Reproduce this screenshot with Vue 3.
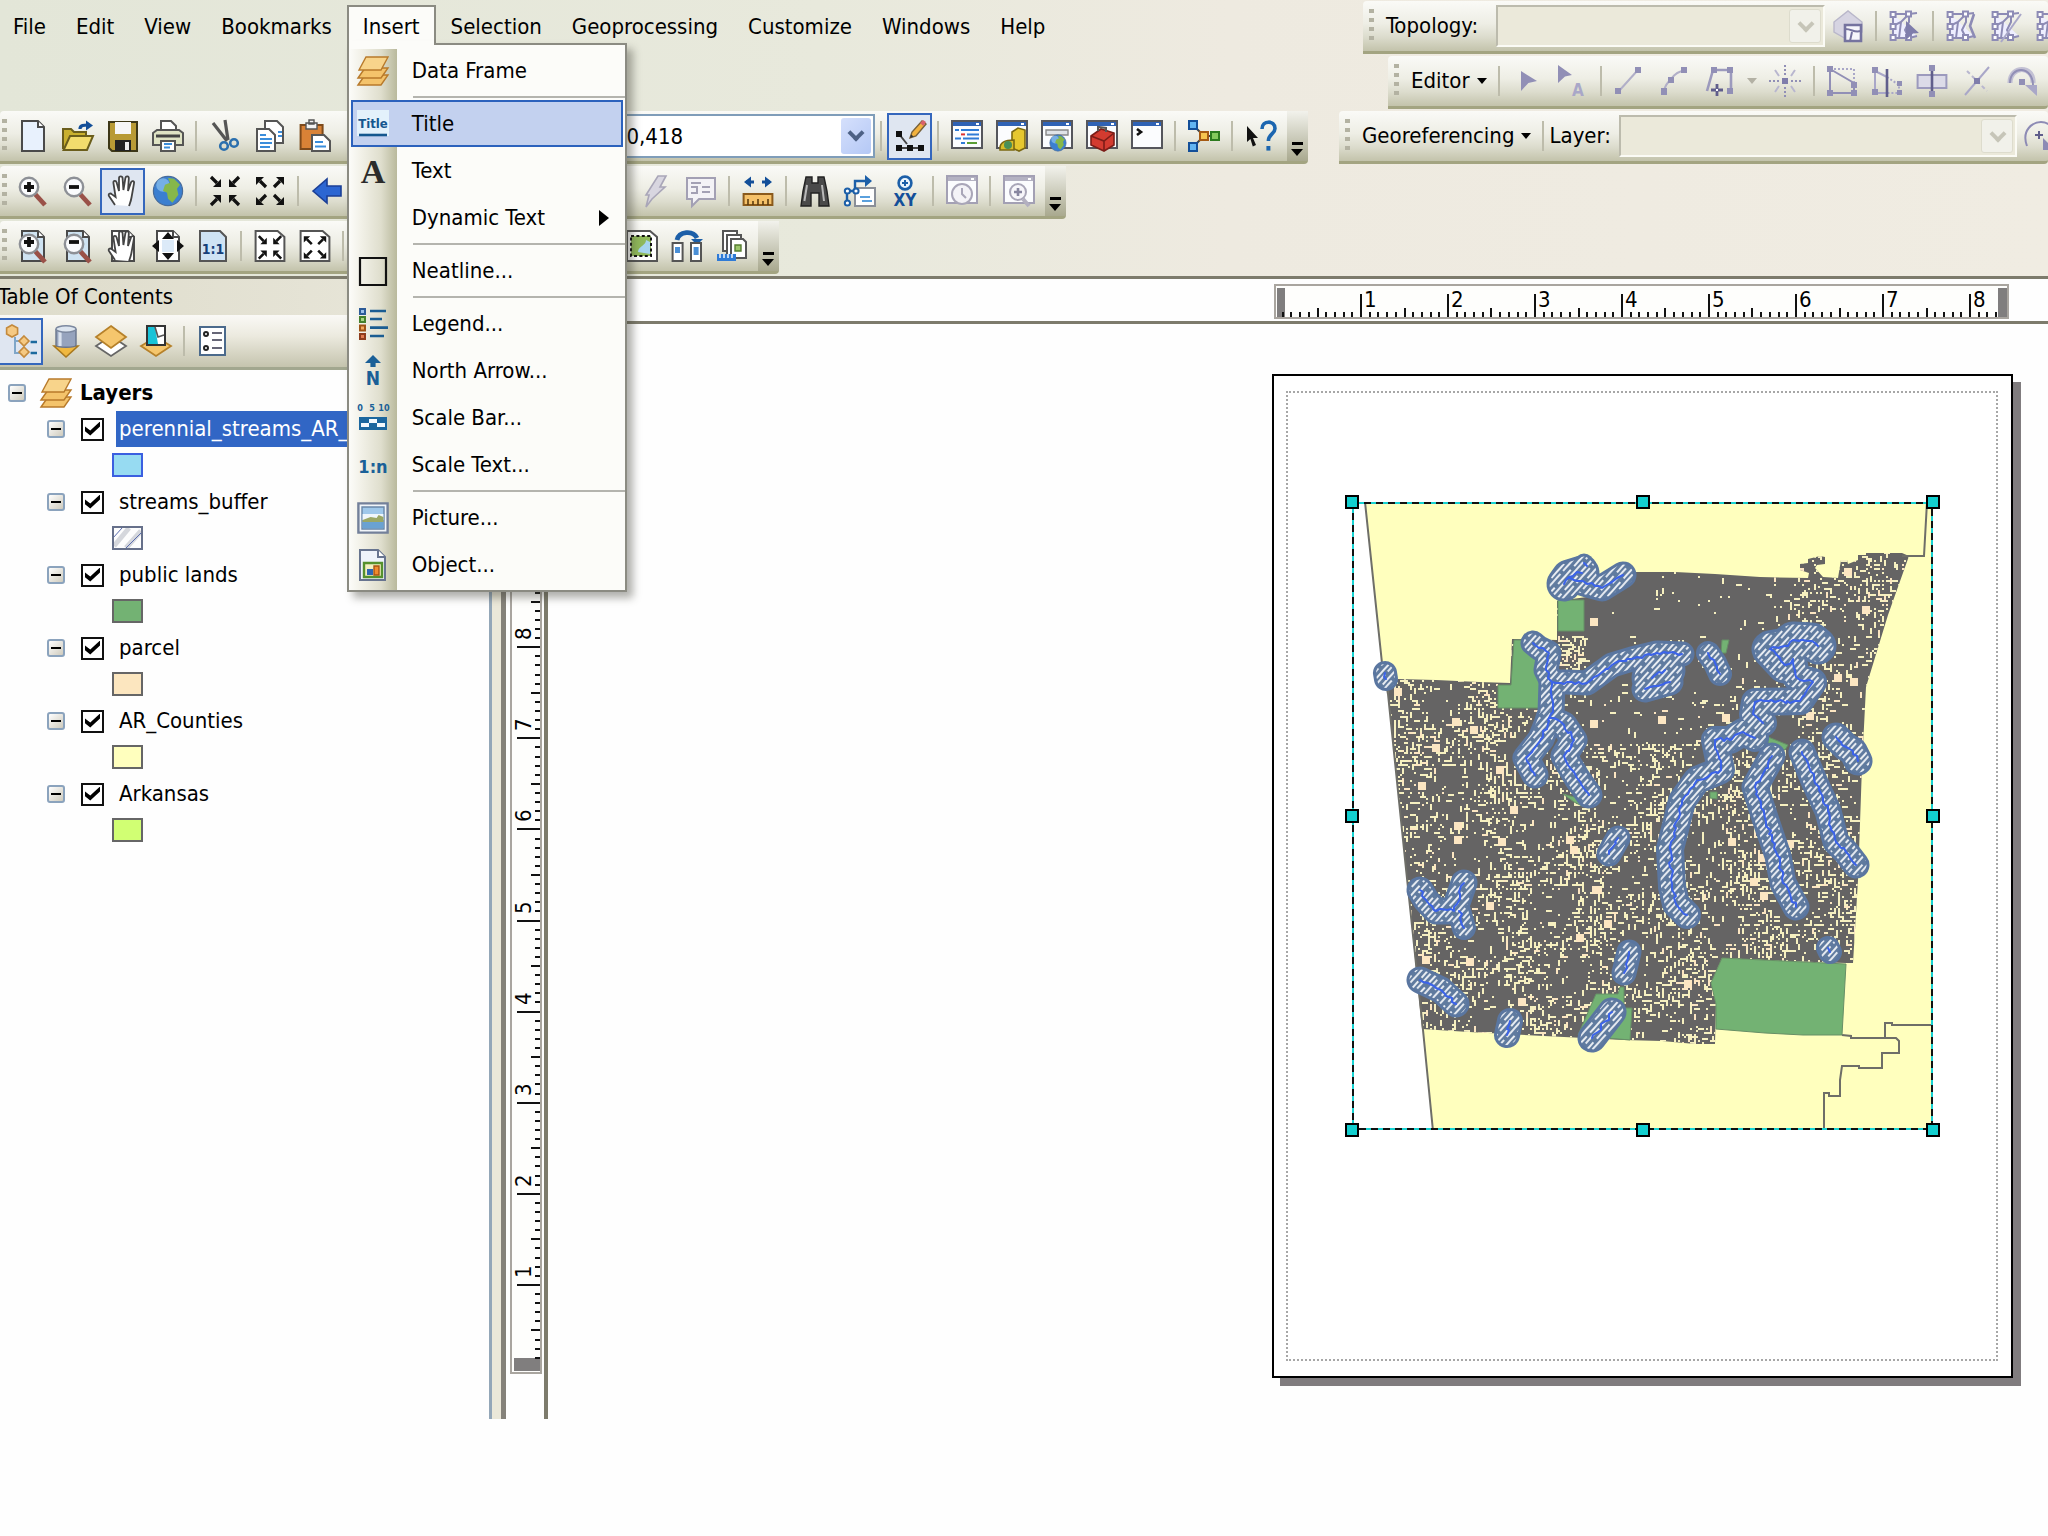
<script setup>
/* ---------- icon artwork, drawn on a 16 x 16 grid ---------- */
const sheet = (fill = '#f4f8fd') =>
  `<path d="M2.5.5h8l3 3v12h-11z" fill="${fill}" stroke="#4a4a4a"/><path d="M10.5.5v3h3" fill="#fff" stroke="#4a4a4a"/>`
const pane = (body, frame = '#55565c', bar = '#2f62b5') =>
  `<path d="M.5.5h15v13.500h-15z" fill="#fbfcfe" stroke="${frame}"/><path d="M1 1h14v2H1z" fill="${bar}"/><path d="M12.500 1.500h1.500v1h-1.500z" fill="#fff"/>${body}`
const lens = (sign, cx = 6, cy = 6) =>
  `<path d="M${cx + 3} ${cy + 3.500}l5 5.500" stroke="#9a5148" stroke-width="2.400"/><circle cx="${cx}" cy="${cy}" r="4.600" fill="#fafbfd" stroke="#8d9096" stroke-width="1.200"/><path d="${sign}" stroke="#111" stroke-width="1.900"/>`
const plus = 'M3.500 6h5M6 3.500v5'
const minus = 'M3.500 6h5'
const hand =
  '<path d="M4 15L1 10.500c-.6-1 .6-1.700 1.500-.8L4.300 11 3.200 4c-.1-1.300 1.300-1.500 1.600-.2L6 8 6 1.700C6 .4 7.700.4 7.800 1.700L8.200 7.500 9.200 1.500c.3-1.200 1.800-1 1.700.3L10.500 8l1.500-4.300c.5-1.100 1.800-.7 1.500.5L12.300 11c-.3 2-.8 3-1.300 4.500" fill="#fff" stroke="#444" stroke-width=".9"/>'
const inward = '<path d="M1 1l3 3M15 1l-3 3M1 15l3-3M15 15l-3-3" stroke="#111" stroke-width="1.600"/><path d="M6 2v4H2zM10 2v4h4zM6 14v-4H2zM10 14v-4h4z" fill="#111"/>'
const outward = '<path d="M6 6L3 3M10 6l3-3M6 10l-3 3M10 10l3 3" stroke="#111" stroke-width="1.600"/><path d="M1 1h4L1 5zM15 1h-4l4 4zM1 15h4l-4-4zM15 15h-4l4-4z" fill="#111"/>'
const stack =
  '<g fill="#f4c36b" stroke="#b87a2b" stroke-width=".7"><path d="M.5 15l3.500-5h11.500l-3.500 5z"/><path d="M.5 11.500l3.500-5h11.500l-3.500 5z"/><path d="M1 7.500L4.500 1h11L12 7.500z" fill="#f8d48b"/></g>'
const globe =
  '<circle cx="8" cy="8" r="7.300" fill="#3b7fd0" stroke="#476b9a" stroke-width=".6"/><circle cx="5.500" cy="5" r="3.400" fill="#8fc3ee" opacity=".7"/><path d="M8 1.500l3 .4 3 3-1.500 2 .7 3-3 4-2.200-2-.5-3-2-1 1-3 2.500-1z" fill="#86b74a"/>'
const mesh =
  '<path d="M2 2h8l4-.5M2 2v12h8l4-1M2 8l4-2 4-4M6 6l-1 8M10 2v4l-2 4 2 4" fill="#eef" stroke="#8d8bb5"/><path d="M.8 1h2.500v2.500H.8zM8.500.8H11v2.500H8.500zM.8 7h2.500v2.500H.8zM.8 12.500h2.500V15H.8zM8.500 12.500H11V15H8.500z" fill="#fff" stroke="#8d8bb5"/>'

const art = {
  newdoc: sheet('#e8f1fd'),
  open: '<path d="M.5 14.500v-10h4l1.500 1.500h6v2" fill="#c9b02e" stroke="#6b5e1c"/><path d="M.8 15L4 8h11.500l-3 7z" fill="#f2dc6d" stroke="#6b5e1c"/><path d="M9 4.500c0-2 2-2 4-2" stroke="#134f99" stroke-width="1.600" fill="none"/><path d="M12 .3l3.500 2.400L12 5.300z" fill="#134f99"/>',
  save: '<path d="M1 1h14v14.500H2.500L1 14z" fill="#b89a35" stroke="#3d3717"/><path d="M4 1h8v6H4z" fill="#f6f6f6"/><path d="M4 10h8v5.500H4z" fill="#222"/><path d="M9 11h2v4H9z" fill="#eee"/>',
  print: '<path d="M4.500 6V.5h5l2.500 2.500V6" fill="#fff" stroke="#555"/><path d="M.5 6.500L2.500 5h11l2 1.500v6H.5z" fill="#dfe3c4" stroke="#555"/><path d="M2 8h12" stroke="#444" stroke-width="1.500"/><path d="M4.500 10.500h7v5h-7z" fill="#fff" stroke="#555"/><path d="M6 12h4M6 13.700h3" stroke="#3b8ddb"/>',
  cut: '<path d="M2 1.500l7 9M8 0l1.500 10" stroke="#555" stroke-width="1.600"/><circle cx="7.500" cy="13" r="1.900" fill="none" stroke="#2b6fae" stroke-width="1.300"/><circle cx="12.500" cy="11.500" r="1.900" fill="none" stroke="#2b6fae" stroke-width="1.300"/>',
  copy: '<path d="M5.500.5h6l3 3v8h-9z" fill="#fff" stroke="#555"/><path d="M1.500 4.500h6l3 3v8h-9z" fill="#fff" stroke="#555"/><path d="M3 7.500h3M3 9.500h6M3 11.500h6M3 13.500h5M12 6h2M12 8h2" stroke="#3b8ddb"/>',
  paste: '<path d="M.8 2.500h11v12H.8z" fill="#d98236" stroke="#7d4a1b"/><path d="M3.500 1.500h5.500v3H3.500zM5 0h2.500v2H5z" fill="#f3f3f3" stroke="#555" stroke-width=".7"/><path d="M6.500 7.500h6l3 3v5h-9z" fill="#fff" stroke="#555"/><path d="M8 11h4M8 13.200h5.500" stroke="#3b8ddb"/>',
  zoomin: lens(plus),
  zoomout: lens(minus),
  hand,
  globe,
  inward,
  outward,
  back: '<path d="M1 8l7-6v3.500h7v5H8V14z" fill="#2c66d2" stroke="#1b3f96" stroke-width=".8"/>',
  pgin: sheet('#cfe3f2') + lens(plus, 6, 7),
  pgout: sheet('#cfe3f2') + lens(minus, 6, 7),
  pghand: sheet('#fff') + hand,
  pgall: sheet('#fff') + '<path d="M8 1l3 3.500H5zM8 15l3-3.500H5zM0 8l3.500-3v6zM16 8l-3.500-3v6z" fill="#111"/><path d="M5 5h6v6H5z" fill="#dceaf8"/>',
  pgone: '<path d="M1.500.5h10l3 3v12h-13z" fill="#cfe3f4" stroke="#555"/><text x="8" y="12" font-size="7" font-weight="700" text-anchor="middle" fill="#163f78">1:1</text>',
  pgfixin: '<path d="M.8.5h11l3.400 3v12H.8z" fill="#fff" stroke="#555"/><g transform="translate(1.600 2.300) scale(.8)">' + inward + '</g>',
  pgfixout: '<path d="M.8.5h11l3.400 3v12H.8z" fill="#fff" stroke="#555"/><g transform="translate(1.600 2.300) scale(.8)">' + outward + '</g>',
  edit: '<path d="M2.500 7l4 5M2 14h12" stroke="#444"/><path d="M1 5.500h3v3H1zM1 12.500h3v3H1zM6.500 12.500h3v3h-3zM12 12.500h3v3h-3z" fill="#111"/><path d="M8 9l1-3 5-5.500L16 2l-5 6z" fill="#f2b23e" stroke="#77613a" stroke-width=".7"/><path d="M13 1.500L14.500 0 16 1l-1.300 2z" fill="#d8626b"/><path d="M8 9l.6-1.800 1.200 1.100z" fill="#333"/>',
  listwin: pane('<path d="M5 7.200h2" stroke="#d33"/><path d="M2 5h2M5 5h9M8 7.200h6M2 9.300h3M6 9.300h8M5 11.500h2" stroke="#2f7bd6"/><path d="M8 11.500h5" stroke="#5a9e35"/>'),
  catalog: pane('<path d="M8 6l3-2 3.500 1v9l-3 1.500L8 14z" fill="#e6c72f" stroke="#7b6812" stroke-width=".8"/><path d="M2 14c0-3 3-4 7-4v5H2z" fill="#d9bd2a" stroke="#7b6812" stroke-width=".8"/><circle cx="6" cy="12.500" r="2" fill="#4a8f58"/>'),
  search: pane('<path d="M2.500 5h11v2.500h-11z" fill="#dfe3e8" stroke="#888" stroke-width=".7"/><g transform="translate(4 7) scale(.56)">' + globe + '</g>'),
  toolbox: pane('<path d="M2.500 8l5-3.500 6.500 2v6l-5 3-6.500-3z" fill="#d33b30" stroke="#7c1d18" stroke-width=".8"/><path d="M2.500 8l6.500 2.500 5-4M9 10.500v5" stroke="#7c1d18" fill="none" stroke-width=".8"/><path d="M6 5.500V3.500l4 .5V6" stroke="#555" fill="none"/>'),
  python: pane('<path d="M3 4.500l2 1.500-2 1.500" stroke="#111" fill="none" stroke-width="1.300"/>'),
  model: '<path d="M3 3l5 5-5 5M8 8h7" stroke="#444" fill="none"/><path d="M.5.5h4v4h-4zM.5 11.500h4v4h-4z" fill="#62b5f2" stroke="#134f99"/><path d="M6 6h4v4H6z" fill="#f6c54e" stroke="#a55b14"/><path d="M11.500 6h4v4h-4z" fill="#84c95c" stroke="#2c7a1e"/>',
  help: '<path d="M1 3l5.500 6H4l1.500 3.500-1.600.7L2.700 9.500 1 11z" fill="#111"/><path d="M8.500 4.500c0-4.500 6.500-4.500 6.500-.3C15 7 11.700 7 11.700 10.500" fill="none" stroke="#1c66b0" stroke-width="1.800"/><path d="M10.700 13h2v2.300h-2z" fill="#1c66b0"/>',
  bolt: '<path d="M9 .5h4L10 6h2.500L6 12l-3 4 1.500-6H3z" fill="#d8d6e0" stroke="#a9a6b8" stroke-width=".8"/>',
  popup: '<path d="M1 1.500h14v10.500H7L3.500 15.500V12H1z" fill="#f3f2f6" stroke="#a3a0b4"/><path d="M3 4h5M3 6h3v3H3M8.500 6h4M8.500 8.500h4" stroke="#a3a0b4"/>',
  measure: '<path d="M.8 9.500h14.400v5.500H.8z" fill="#f5c169" stroke="#8a5a1c"/><path d="M3 15v-3M5.500 15v-2M8 15v-3M10.500 15v-2M13 15v-3" stroke="#5d3c10" stroke-width=".8"/><path d="M2 3.500h4M10 3.500h4" stroke="#134f99" stroke-width="1.400"/><path d="M1 3.500L4.500.8v5.400zM15 3.500L11.500.8v5.400z" fill="#134f99"/>',
  binoc: '<path d="M3.500 1h3v3h3V1h3l1.500 7 1 7.500h-5V9H6v6.500H1L2 8z" fill="#4a4a4a" stroke="#222" stroke-width=".7"/><path d="M4 5L2.700 13M11.500 5l1 8" stroke="#b9b9b9"/>',
  route: '<path d="M5.500 6.500h10v9h-10z" fill="#fff" stroke="#8a8f98"/><path d="M1.500 14V8h4V3h6" stroke="#1c5fa8" fill="none" stroke-width="1.200"/><path d="M10.500 0L14 3l-3.500 3z" fill="#1c5fa8"/><circle cx="1.700" cy="8" r="1.300" fill="#fff" stroke="#1c5fa8"/><circle cx="1.700" cy="14" r="1.300" fill="#fff" stroke="#1c5fa8"/><circle cx="6" cy="8" r="1.300" fill="#fff" stroke="#1c5fa8"/><path d="M8 11h5M9 13h5" stroke="#5aa0dd"/>',
  xy: '<circle cx="8" cy="4" r="3.200" fill="#eaf4fc" stroke="#1c5fa8" stroke-width="1.300"/><path d="M6.500 4h3M8 2.500v3" stroke="#1c5fa8"/><text x="8" y="15.500" font-size="8.500" font-weight="700" text-anchor="middle" fill="#134f99">XY</text>',
  clock: pane('<circle cx="8" cy="9.500" r="5" fill="#f4f3f7" stroke="#a9a6b8"/><path d="M8 6.500v3l2 2" stroke="#a9a6b8" fill="none"/>', '#a3a0b4', '#b4b2c2'),
  viewer: pane('<path d="M10 12l3 3.500" stroke="#b3b0c0" stroke-width="2"/><circle cx="7.500" cy="8.500" r="4" fill="#f7f6fa" stroke="#a9a6b8"/><path d="M5.500 8.500h4M7.500 6.500v4" stroke="#8886a0" stroke-width="1.300"/>', '#a3a0b4', '#b4b2c2'),
  draft: '<path d="M.5.500h11.500l3.500 3v12H.5z" fill="#fff" stroke="#555"/><path d="M2.500 3h10v10h-10z" fill="#8fb85a" stroke="#111" stroke-dasharray="1.500 1.200"/><path d="M6 11c0-3 4-3 4-6l2 1v6z" fill="#a6d4ee"/>',
  swap: '<path d="M3 5C4 .500 11 0 13 4" stroke="#1c5fa8" stroke-width="2.400" fill="none"/><path d="M10 4.500h6l-3 3z" fill="#1c5fa8"/><path d="M.8 6.500h5v9h-5zM10 6.500h5v9h-5z" fill="#fff" stroke="#555"/><path d="M2 8.500h2.500v3H2zM11.300 8.500h2.500v4h-2.500z" fill="#4a8fd6"/>',
  pages: '<path d="M3.500.5h7v10h-7z" fill="#fff" stroke="#555"/><path d="M5.500 2.500h7v10h-7z" fill="#fff" stroke="#555"/><path d="M7.500 4.500h6l1.500 1.500v8H7.500z" fill="#fff" stroke="#555"/><path d="M9.500 7.500h3v3h-3z" fill="#9cc66b" stroke="#557c2f" stroke-width=".7"/><path d="M.5 12h9.500v3.500H.5z" fill="#2f7bd6"/><path d="M2 12v2M4 12v2M6 12v2M8 12v2" stroke="#fff" stroke-width=".7"/>',
  topo1: '<path d="M1 6l7-5.500L15 6v5l-7 4-7-4z" fill="#d6d4e2" stroke="#b9b7ca" stroke-width=".7"/><path d="M6.500 7.500h8v8h-8z" fill="#f6f6fb" stroke="#75739f" stroke-width="1.300"/><path d="M6.500 9.500c4 0 4 2 8 1M10 11l-1 4.500" stroke="#75739f" fill="none"/>',
  topo2: mesh + '<path d="M8.500 5.500l6.500 6-3 .3-3.500 3.200z" fill="#7f7dab"/>',
  topo3: mesh + '<path d="M14 2l-2 6 2.500 6" stroke="#8d8bb5" fill="none" stroke-width="1.300"/>',
  topo4: mesh + '<path d="M15 2L5 16" stroke="#a9a7c8" fill="none"/>',
  arrow: '<path d="M5 3l8 5-4.300 1L5 13z" fill="#918fb6"/>',
  arrowA: '<path d="M1 0l7 5-3.500.8L1 9z" fill="#918fb6"/><text x="11" y="15.500" font-size="8.500" font-weight="700" text-anchor="middle" fill="#a9a7c8">A</text>',
  seg: '<path d="M3 13L12 3" stroke="#b1afc8"/><path d="M1 11.500h3V14.500H1zM11 1h3v3h-3z" fill="#918fb6"/>',
  arc: '<path d="M3 14c0-4 2-5 3.500-7S10 3 13 3" stroke="#b1afc8" fill="none"/><path d="M1.500 11.500h3V15h-3zM5 6h3v3H5zM11.500 1h3v3h-3z" fill="#918fb6"/>',
  poly: '<path d="M2 13L5 2.500h9V13" stroke="#9c9abd" fill="none" stroke-width="1.300"/><path d="M4 1h3v3H4zM12 1h3v3h-3zM12 11.500h3v3h-3z" fill="#918fb6"/><path d="M7 9.500v6M4 12.500h6" stroke="#605e8c" stroke-width="1.400"/><path d="M6.500 12h1v1h-1z" fill="#fff"/>',
  spark: '<path d="M8 0v5M8 11v5M0 8h5M11 8h5" stroke="#918fb6" stroke-dasharray="1 1"/><path d="M3 2.500l2 3M13 2.500l-2 3M3 13.500l2-3M13 13.500l-2-3" stroke="#b9b7cf"/><path d="M6.500 6.500h3v3h-3z" fill="#7f7dab"/>',
  resh: '<path d="M2 2v12h12V9L2 2" stroke="#918fb6" fill="none"/><path d="M2 2h12v8" stroke="#a9a7c8" fill="none" stroke-dasharray="1 1"/><path d="M.5.5h3v3h-3zM.5 12.500h3v3h-3zM12.500 12.500h3v3h-3zM12.500 8.500h3v3h-3z" fill="#918fb6"/>',
  cutp: '<path d="M2 3v11h6M2 3l6 3" stroke="#a9a7c8" fill="none"/><path d="M8 6l6 4v4H8" stroke="#a9a7c8" fill="none" stroke-dasharray="1 1"/><path d="M8 2v14" stroke="#605e8c" stroke-width="1.300"/><path d="M.5 1h3v3h-3zM.5 12h3v3h-3zM13 8h2.500v2.500H13zM13 12.500h2.500V15H13z" fill="#918fb6"/>',
  split: '<path d="M.8 5h14.400v6.500H.8z" fill="#dcdbe8" stroke="#9c9abd"/><path d="M8 1v14" stroke="#605e8c" stroke-width="1.300"/><path d="M6.500 0h3v3h-3zM6.500 13h3v3h-3z" fill="#918fb6"/>',
  cross: '<path d="M2 15L14 1" stroke="#a9a7c8"/><path d="M3 3l10 10" stroke="#b9b7cf" stroke-dasharray="2 1.500"/><path d="M6.500 6.500h3v3h-3z" fill="#7f7dab"/>',
  rotate: '<path d="M2 9C2 0 14 0 13.500 9" stroke="#c3c1d4" stroke-width="2.600" fill="none"/><path d="M2 9C2 0 14 0 13.500 11" stroke="#918fb6" fill="none"/><path d="M9.500 10h6v5.500z" fill="#a9a7c8"/><path d="M6.500 7h3v3h-3z" fill="#918fb6"/>',
  rotate2: '<path d="M2 13C-1 5 5 1 9 1s7 3 6 8" stroke="#8d8bb5" fill="none"/><path d="M8 5.500v4M6 7.500h4" stroke="#605e8c"/><path d="M10 9v6h6z" fill="#8d8bb5"/>',
  tocOrder: '<path d="M5 6v8h4M5 8h4" stroke="#7fa6c8" fill="none"/><path d="M12.800 8.500H16M12.800 14H16" stroke="#1c6a9e" stroke-width="1.300"/><g fill="#f5c983" stroke="#c48a3d" stroke-width=".8"><path d="M3.500 0l2.800 1.500v3L3.500 6 .8 4.500v-3z"/><path d="M9.500 5.500l2.500 2.500-2.500 2.500L7 8zM9.500 11l2.500 2.500L9.500 16 7 13.500z"/></g>',
  tocSource: '<path d="M2 10.500h12l-6 5.500z" fill="#f0b840" stroke="#a8791f" stroke-width=".8"/><path d="M3 2v8c0 1.500 10 1.500 10 0V2" fill="#96a3bd" stroke="#68748c" stroke-width=".7"/><path d="M5 3v7.500" stroke="#dbe2ee" stroke-width="1.600"/><ellipse cx="8" cy="2" rx="5" ry="1.600" fill="#dde5ef" stroke="#7c889f" stroke-width=".7"/>',
  tocVis: '<path d="M8 5.500l7.500 5L8 15.500l-7.500-5z" fill="#fff" stroke="#666" stroke-width=".9"/><path d="M8 .5l7.500 5.500L8 11.500.5 6z" fill="#f5c66d" stroke="#b6812a" stroke-width=".9"/>',
  tocSel: '<path d="M8 6l7.500 4.500L8 15.500.5 10.500z" fill="#f5c66d" stroke="#b6812a" stroke-width=".9"/><path d="M3.500.5h9v9.500h-9z" fill="#fff" stroke="#333"/><path d="M4 1h3.500L9 9.500H4z" fill="#19c3d8"/><path d="M7.500 1L9 6l3-1" stroke="#555" fill="none" stroke-width=".8"/>',
  tocOpt: '<path d="M1.500 1h12.500v14H1.500z" fill="#fff" stroke="#4b6a8c"/><path d="M7.500 4h5M7.500 7.500h5M7.500 11.500h5" stroke="#667"/><circle cx="4.500" cy="4.500" r="1" fill="none" stroke="#222"/><circle cx="4.500" cy="11.500" r="1" fill="none" stroke="#222"/>',
  stack,
  title: '<path d="M0 1h16v13H0z" fill="#e3f1fb"/><text x="8" y="10" font-size="6.500" font-weight="700" text-anchor="middle" fill="#14578f">Title</text><path d="M1 13.500h14" stroke="#14578f" stroke-width="1.300"/>',
  letterA: '<text x="8" y="14" font-size="17" font-weight="700" text-anchor="middle" fill="#2b2b2b" font-family="Liberation Serif, serif">A</text>',
  neat: '<path d="M1.500 1.500h13v13.500h-13z" fill="none" stroke="#111" stroke-width="1.100"/>',
  legend: '<path d="M6.500 1.500h8M6.500 5.500h6M6.500 9.800h9M6.500 14h7" stroke="#1b5d92" stroke-width="1.300"/><path d="M1.500.5h2.500v2.500H1.500z" fill="#9cc0ea" stroke="#2c5b98"/><path d="M1.500 4.500h2.500V7H1.500z" fill="#a9d684" stroke="#45802c"/><path d="M1.500 8.700h2.500v2.500H1.500z" fill="#f3a75c" stroke="#9e5316"/><path d="M1.500 13h2.500v2.500H1.500z" fill="#e07a50" stroke="#8e3b1c"/>',
  north: '<path d="M8 0l4 4H9.300v2H6.700V4H4z" fill="#1a5f97"/><text x="8" y="15" font-size="9.500" font-weight="700" text-anchor="middle" fill="#1a5f97">N</text>',
  scalebar: '<g font-size="4.500" font-weight="700" text-anchor="middle" fill="#1a5f97"><text x="1.500" y="4.500">0</text><text x="7.500" y="4.500">5</text><text x="13.500" y="4.500">10</text></g><path d="M1 7.500h14V14H1z" fill="#1c679f"/><path d="M2 10.500h4V12.500H2zM6 8.500h4v2H6zM10 10.500h4v2h-4z" fill="#f3f9fd"/>',
  scaletext: '<text x="8" y="12" font-size="9" font-weight="700" text-anchor="middle" fill="#1a6098">1:n</text>',
  picture: '<path d="M.7.700h14.600v14.600H.7z" fill="#f1f5f9" stroke="#73809a" stroke-width="1.200"/><path d="M2.500 2.500h11v11h-11z" fill="#9fc8ea" stroke="#6a87a8" stroke-width=".7"/><path d="M2.800 6h10.400v3H2.800z" fill="#eff6fb"/><path d="M2.800 9l4-1.500 3 .5 1-1.500 2.400 1v2.500H2.800z" fill="#9aa765"/><path d="M2.800 10h10.400v3.200H2.800z" fill="#6aa2d2"/>',
  object: '<path d="M1.500.5h9l3.500 3.500v11.500H1.500z" fill="#eef3fa" stroke="#67748f"/><path d="M10.500.5V4H14" fill="#fff" stroke="#67748f"/><path d="M3.500 7h9v7h-9z" fill="#f2efc0" stroke="#55912d" stroke-width="1.200"/><path d="M5 10h3v3H5z" fill="#2f66b3"/><path d="M8.500 8.500h2.500V13H8.500z" fill="#f08a2e" stroke="#a7520f" stroke-width=".7"/>',
}

/* ---------- menus and toolbars ---------- */
const menus = ['File', 'Edit', 'View', 'Bookmarks', 'Insert', 'Selection', 'Geoprocessing', 'Customize', 'Windows', 'Help']
const insertMenu = [
  { label: 'Data Frame', icon: 'stack' },
  null,
  { label: 'Title', icon: 'title', active: true },
  { label: 'Text', icon: 'letterA' },
  { label: 'Dynamic Text', sub: true },
  null,
  { label: 'Neatline...', icon: 'neat' },
  null,
  { label: 'Legend...', icon: 'legend' },
  { label: 'North Arrow...', icon: 'north' },
  { label: 'Scale Bar...', icon: 'scalebar' },
  { label: 'Scale Text...', icon: 'scaletext' },
  null,
  { label: 'Picture...', icon: 'picture' },
  { label: 'Object...', icon: 'object' },
]
const bars = {
  files: ['newdoc', 'open', 'save', 'print', '|', 'cut', 'copy', 'paste'],
  windows: ['|', 'edit*', '|', 'listwin', 'catalog', 'search', 'toolbox', 'python', '|', 'model', '|', 'help'],
  navLeft: ['zoomin', 'zoomout', 'hand*', 'globe', '|', 'inward', 'outward', '|', 'back'],
  navRight: ['bolt', 'popup', '|', 'measure', '|', 'binoc', 'route', 'xy', '|', 'clock', '|', 'viewer'],
  pageLeft: ['pgin', 'pgout', 'pghand', 'pgall', 'pgone', '|', 'pgfixin', 'pgfixout', '|'],
  pageRight: ['draft', 'swap', 'pages'],
  topology: ['topo1', '|', 'topo2', '|', 'topo3', 'topo4', 'topo3'],
  editor: ['|', 'arrow', 'arrowA', '|', 'seg', 'arc', 'poly', '^', 'spark', '|', 'resh', 'cutp', 'split', 'cross', 'rotate'],
  toc: ['tocOrder*', 'tocSource', 'tocVis', 'tocSel', '|', 'tocOpt'],
}
const parse = (list) => list.map((n) => ({ name: n.replace('*', ''), on: n.endsWith('*') }))

/* ---------- table of contents ---------- */
const layers = [
  { name: 'perennial_streams_AR_', fill: '#97dbf2', line: '#3b5fe0', selected: true },
  { name: 'streams_buffer', hatch: true, line: '#66708a' },
  { name: 'public lands', fill: '#73b273', line: '#666666' },
  { name: 'parcel', fill: '#fce6bf', line: '#666666' },
  { name: 'AR_Counties', fill: '#ffffbe', line: '#666666' },
  { name: 'Arkansas', fill: '#d1ff73', line: '#666666' },
]

/* ---------- rulers ---------- */
const hTicks = Array.from({ length: 83 }, (_, i) => i + 1).map((i) => ({ p: Math.round(i * 8.7), len: i % 10 === 0 ? 23 : i % 5 === 0 ? 9 : 5 }))
const vTicks = Array.from({ length: 108 }, (_, i) => i + 2).map((i) => ({ p: Math.round(1004 - i * 9.11), len: i % 10 === 0 ? 23 : i % 5 === 0 ? 9 : 5 }))
const hNums = [1, 2, 3, 4, 5, 6, 7, 8].map((n) => ({ n, p: Math.round(n * 87) }))
const vNums = [1, 2, 3, 4, 5, 6, 7, 8, 9, 10].map((n) => ({ n, p: Math.round(1004 - n * 91.1) }))

const sx = (x) => Math.round((x - 183) * 0.5026)
const sy = (y) => Math.round((y - 413) * 0.3444)
const project = (s) => s.replace(/(\d+),(\d+)/g, (_, x, y) => `${sx(+x)},${sy(+y)}`)

/* Seeded generator, so the map is the same on every load */
let seed = 20117
const rnd = () => {
  seed = (seed * 1103515245 + 12345) % 2147483648
  return seed / 2147483648
}
const meander = (points) => {
  const p = points.split(' ').map((q) => q.split(',').map(Number))
  const out = [p[0]]
  for (let i = 1; i < p.length; i++) {
    const [ax, ay] = p[i - 1]
    const [bx, by] = p[i]
    const n = Math.max(1, Math.round(Math.hypot(bx - ax, by - ay) / 4))
    for (let k = 1; k <= n; k++) {
      const j = k < n ? 4 : 0
      out.push([Math.round(ax + ((bx - ax) * k) / n + (rnd() - 0.5) * j), Math.round(ay + ((by - ay) * k) / n + (rnd() - 0.5) * j)])
    }
  }
  return out.map((q) => q.join()).join(' ')
}

const county = project('208,413 1345,413 1345,2240 345,2240 325,1945 255,970 243,880')
const countyLines = [
  '208,413 243,880 255,970 290,1480 325,1945 345,2240',
  '1328,413 1322,570 1278,570',
  '1345,1932 1258,1932 1258,1925 1243,1925 1243,1967',
  '1158,1960 1175,1963 1175,1968 1265,1969 1271,1978 1271,2012 1238,2012 1238,2056 1192,2056 1192,2050 1157,2050 1153,2090 1153,2137 1132,2137 1132,2130 1123,2130 1123,2240',
].map(project)
const parcels = project(
  '255,960 275,927 350,930 435,937 498,940 502,810 590,815 590,700 650,690 745,617 825,617 905,623 995,630 1090,635 1092,618 1075,610 1075,592 1090,590 1090,578 1115,570 1125,572 1125,592 1108,596 1105,606 1120,632 1150,635 1155,582 1168,580 1170,592 1190,580 1190,567 1205,567 1205,560 1278,560 1292,570 1250,740 1205,950 1198,1180 1190,1510 1180,1752 1165,1752 1040,1745 920,1738 897,1810 907,1870 905,1988 865,1988 800,1978 725,1975 565,1963 415,1952 322,1942 290,1480'
)
const lands = [
  '592,697 645,697 645,788 592,788',
  '505,815 560,815 578,1010 473,1010 473,943 500,943',
  '920,1738 1040,1745 1165,1755 1158,1960 1080,1962 1005,1956 907,1943 907,1870 897,1810',
  '668,1843 712,1843 716,1820 724,1820 724,1882 740,1882 737,1975 690,1970 632,1960',
  '920,815 934,815 928,850 918,850',
  '1010,1095 1050,1120 1045,1132 1010,1112',
  '603,1260 640,1275 645,1298 625,1285',
  '895,1255 910,1255 910,1275 895,1272',
  '1105,770 1113,770 1113,778 1105,778',
].map(project)
const streams = [
  { w: 34, p: '604,650 615,630 640,618' },
  { w: 26, p: '612,635 650,650 680,662 722,625' },
  { w: 18, p: '645,590 650,600' },
  { w: 24, p: '543,822 556,838 575,850 568,900 580,935 610,936 650,940 700,885 740,868 790,850 840,855' },
  { w: 40, p: '780,925 805,900' },
  { w: 26, p: '765,955 815,935' },
  { w: 26, p: '580,935 578,1030 560,1100 530,1155 548,1205' },
  { w: 26, p: '575,1040 605,1060 625,1105 605,1150 630,1215 655,1265' },
  { w: 23, p: '892,850 905,880 915,912' },
  { w: 36, p: '1110,830 1098,818 1060,815 1045,830 1015,840 1045,885' },
  { w: 27, p: '1045,885 1060,870 1066,920 1100,935 1075,990 985,995 980,1030 1000,1055' },
  { w: 27, p: '985,1098 960,1080 935,1105 905,1105 918,1190 870,1220 840,1280 815,1420 820,1530 828,1580 850,1612' },
  { w: 26, p: '1018,1150 985,1240 1005,1330 1030,1440 1040,1520 1066,1590' },
  { w: 26, p: '1078,1140 1105,1230 1130,1310 1145,1400 1165,1430 1185,1468' },
  { w: 28, p: '1145,1095 1165,1125 1180,1135 1190,1165' },
  { w: 24, p: '712,1390 695,1435' },
  { w: 26, p: '318,1540 330,1570 350,1600 385,1600 405,1520' },
  { w: 23, p: '395,1600 405,1650' },
  { w: 26, p: '318,1800 360,1830 390,1872' },
  { w: 25, p: '498,1920 492,1962' },
  { w: 28, p: '700,1895 660,1970' },
  { w: 24, p: '735,1720 724,1782' },
  { w: 23, p: '1131,1708 1134,1720' },
  { w: 23, p: '248,910 250,928' },
].map((s) => {
  const p = project(s.p)
  return { w: s.w, p, line: meander(p) }
})

/* Open ground left between parcel outlines */
const openness = (x, y) => {
  const wave = 0.75 + 0.6 * Math.sin(x / 19 + y / 31) * Math.cos(y / 23 - x / 41)
  if (x > 202 && x < 232 && y > 130 && y < 165) return 0.4
  if (x > 225 && x < 405 && y < 175) return 0.015
  if (x > 190 && x < 440 && y < 240) return 0.06 * wave
  if (x < 190 && y < 300) return 0.24 * wave
  if (x < 190 && y < 370) return 0.15 * wave
  if (x > 400 && y < 200) return 0.18 * wave
  return 0.22 * wave
}
const specks = { cream: '', peach: '' }
for (let y = 50; y < 545; y += 4) {
  for (let x = 30; x < 560; x += 4) {
    if (rnd() > openness(x, y) * 2.5) continue
    const kind = rnd()
    const big = kind < 0.008
    const w = big ? 8 : kind < 0.25 ? 6 : 2
    const h = big ? 8 : kind > 0.25 && kind < 0.5 ? 6 : 2
    const dx = rnd() < 0.3 ? 2 : 0
    const dy = rnd() < 0.3 ? 2 : 0
    specks[big || rnd() < 0.12 ? 'peach' : 'cream'] += `M${x + dx} ${y + dy}h${w}v${h}h-${w}z`
  }
}
const handles = [[0, 0], [50, 0], [100, 0], [0, 50], [100, 50], [0, 100], [50, 100], [100, 100]]
</script>

<template>
  <div class="app">
    <header class="chrome">
      <div class="row">
        <ul class="menubar" role="menubar">
          <li v-for="m in menus" :key="m" :class="{ open: m === 'Insert' }">
            <button type="button" class="menu-btn">{{ m }}</button>
            <ul v-if="m === 'Insert'" class="dropdown" role="menu">
              <template v-for="(it, i) in insertMenu" :key="i">
                <li v-if="!it" class="rule" role="separator"></li>
                <li v-else>
                  <button type="button" class="item" :class="{ active: it.active }">
                    <svg class="icon" viewBox="0 0 16 16" fill="none" aria-hidden="true" v-html="art[it.icon] || ''"></svg>
                    <span>{{ it.label }}</span>
                    <i v-if="it.sub" class="sub"></i>
                  </button>
                </li>
              </template>
            </ul>
          </li>
        </ul>
        <div class="toolbar docked topology">
          <i class="grip"></i>
          <label for="topo">Topology:</label>
          <span class="combo off topo-combo"><select id="topo" disabled></select></span>
          <template v-for="(b, i) in parse(bars.topology)" :key="i">
            <i v-if="b.name === '|'" class="sep"></i>
            <button v-else type="button" class="tool" :aria-label="b.name"><svg class="icon" viewBox="0 0 16 16" fill="none" v-html="art[b.name]"></svg></button>
          </template>
        </div>
      </div>

      <div class="row">
        <div class="toolbar docked editor">
          <i class="grip"></i>
          <button type="button" class="text-btn">Editor <i class="caret"></i></button>
          <template v-for="(b, i) in parse(bars.editor)" :key="i">
            <i v-if="b.name === '|'" class="sep"></i>
            <button v-else-if="b.name === '^'" type="button" class="mini" aria-label="More construction tools"><i class="caret dim"></i></button>
            <button v-else type="button" class="tool" :aria-label="b.name"><svg class="icon" viewBox="0 0 16 16" fill="none" v-html="art[b.name]"></svg></button>
          </template>
        </div>
      </div>

      <div class="row">
        <div class="toolbar">
          <i class="grip"></i>
          <template v-for="(b, i) in parse(bars.files)" :key="i">
            <i v-if="b.name === '|'" class="sep"></i>
            <button v-else type="button" class="tool" :aria-label="b.name"><svg class="icon" viewBox="0 0 16 16" fill="none" v-html="art[b.name]"></svg></button>
          </template>
          <span class="combo scale"><input type="text" value="1:380,418" aria-label="Map scale" /></span>
          <template v-for="(b, i) in parse(bars.windows)" :key="'w' + i">
            <i v-if="b.name === '|'" class="sep"></i>
            <button v-else type="button" class="tool" :class="{ on: b.on }" :aria-label="b.name"><svg class="icon" viewBox="0 0 16 16" fill="none" v-html="art[b.name]"></svg></button>
          </template>
          <button type="button" class="more" aria-label="Toolbar options"></button>
        </div>
        <div class="toolbar docked georef">
          <i class="grip"></i>
          <button type="button" class="text-btn">Georeferencing <i class="caret"></i></button>
          <i class="sep"></i>
          <label for="layer">Layer:</label>
          <span class="combo off layer-combo"><select id="layer" disabled></select></span>
          <button type="button" class="tool" aria-label="Rotate"><svg class="icon" viewBox="0 0 16 16" fill="none" v-html="art.rotate2"></svg></button>
        </div>
      </div>

      <div v-for="side in [['navLeft', 'navRight'], ['pageLeft', 'pageRight']]" :key="side[0]" class="row">
        <div class="toolbar">
          <i class="grip"></i>
          <div v-for="part in side" :key="part" class="tools" :class="part">
            <template v-for="(b, i) in parse(bars[part])" :key="i">
              <i v-if="b.name === '|'" class="sep"></i>
              <button v-else type="button" class="tool" :class="{ on: b.on }" :aria-label="b.name"><svg class="icon" viewBox="0 0 16 16" fill="none" v-html="art[b.name]"></svg></button>
            </template>
          </div>
          <button type="button" class="more" aria-label="Toolbar options"></button>
        </div>
      </div>
    </header>

    <main class="work">
      <aside class="toc">
        <h2>Table Of Contents</h2>
        <div class="toc-tools">
          <template v-for="(b, i) in parse(bars.toc)" :key="i">
            <i v-if="b.name === '|'" class="sep"></i>
            <button v-else type="button" class="tool" :class="{ on: b.on }" :aria-label="b.name"><svg class="icon" viewBox="0 0 16 16" fill="none" v-html="art[b.name]"></svg></button>
          </template>
        </div>
        <div class="tree">
          <div class="root">
            <button type="button" class="fold" aria-label="Collapse Layers"></button>
            <svg class="icon" viewBox="0 0 16 16" fill="none" v-html="art.stack"></svg>
            <strong>Layers</strong>
          </div>
          <ul>
            <li v-for="(l, i) in layers" :key="l.name">
              <div class="layer">
                <button type="button" class="fold" :aria-label="'Collapse ' + l.name"></button>
                <input :id="'layer-' + i" type="checkbox" checked />
                <label :for="'layer-' + i" :class="{ selected: l.selected }">{{ l.name }}</label>
              </div>
              <svg class="swatch" width="31" height="24">
                <rect x="1" y="1" width="29" height="22" :fill="l.fill || '#fdfdfd'" />
                <g v-if="l.hatch">
                  <path d="M2 20L17 2M14 22L29 5" stroke="#d5d7dc" stroke-width="5" />
                  <path d="M1 12L10 2M14 22L30 6" stroke="#5a6cae" />
                </g>
                <rect x="1" y="1" width="29" height="22" fill="none" :stroke="l.line" stroke-width="2" />
              </svg>
            </li>
          </ul>
        </div>
      </aside>
      <div class="splitter"></div>

      <section class="view">
        <div class="top-ruler">
          <svg width="735" height="35">
            <rect x="1" y="1" width="733" height="33" fill="#fefefc" stroke="#a9a59f" stroke-width="2" />
            <rect x="3" y="4" width="8" height="29" fill="#807e7e" />
            <rect x="724" y="4" width="9" height="29" fill="#807e7e" />
            <path v-for="t in hTicks" :key="t.p" :d="`M${t.p} 33v-${t.len}`" stroke="#111" stroke-width="2" />
            <text v-for="n in hNums" :key="n.n" :x="n.p + 3" y="23">{{ n.n }}</text>
          </svg>
        </div>
        <div class="stage">
          <div class="side-ruler">
            <svg width="32" height="1002">
              <rect x="1" y="1" width="30" height="998" fill="#fefefc" stroke="#a9a59f" stroke-width="2" />
              <rect x="4" y="984" width="26" height="13" fill="#807e7e" />
              <path v-for="t in vTicks" :key="t.p" :d="`M30 ${t.p - 2}h-${t.len}`" stroke="#111" stroke-width="2" />
              <text v-for="n in vNums" :key="n.n" :transform="`translate(21 ${n.p - 9}) rotate(-90)`">{{ n.n }}</text>
            </svg>
          </div>
          <div class="canvas">
            <div class="paper">
              <div class="margins"></div>
              <div class="frame">
                <svg class="map" viewBox="0 0 581 628" preserveAspectRatio="none">
                  <defs>
                    <pattern id="hatch" width="9" height="24" patternUnits="userSpaceOnUse" patternTransform="rotate(42)">
                      <rect width="9" height="24" fill="#607b9f" />
                      <rect width="2" height="19" fill="#e9edf2" />
                      <rect x="4" y="10" width="2" height="14" fill="#e3e8ef" />
                      <rect x="4" width="2" height="6" fill="#e3e8ef" />
                    </pattern>
                    <clipPath id="parcel-area"><polygon :points="parcels" /></clipPath>
                  </defs>
                  <polygon :points="county" fill="#ffffbe" />
                  <polygon :points="parcels" fill="#656464" />
                  <g clip-path="url(#parcel-area)" shape-rendering="crispEdges">
                    <path :d="specks.cream" fill="#f6f0c0" />
                    <path :d="specks.peach" fill="#fce6c2" />
                  </g>
                  <polyline v-for="c in countyLines" :key="c" :points="c" fill="none" stroke="#6e6e68" stroke-width="2" />
                  <polygon v-for="g in lands" :key="g" :points="g" fill="#73b273" stroke="#678f66" />
                  <g fill="none" stroke-linecap="round" stroke-linejoin="round">
                    <polyline v-for="s in streams" :key="s.p" :points="s.p" stroke="#5a76a0" :stroke-width="s.w + 1" />
                    <polyline v-for="s in streams" :key="'h' + s.p" :points="s.p" stroke="url(#hatch)" :stroke-width="s.w - 5" />
                    <polyline v-for="s in streams" :key="'l' + s.p" :points="s.line" stroke="#3b63ea" stroke-width="2" />
                  </g>
                  <rect x="0" y="0" width="581" height="628" fill="none" stroke="#19d3d3" stroke-width="4" />
                  <rect x="0" y="0" width="581" height="628" fill="none" stroke="#111" stroke-width="4" stroke-dasharray="7 5" />
                </svg>
                <i v-for="h in handles" :key="h.join()" class="handle" :style="{ left: h[0] + '%', top: h[1] + '%' }"></i>
              </div>
            </div>
          </div>
        </div>
      </section>
    </main>
  </div>
</template>

<style>
body {
  margin: 0;
  background: #fefefe;
}
</style>

<style scoped>
.app {
  font-family: 'DejaVu Sans Condensed', 'DejaVu Sans', 'Noto Sans', sans-serif;
  font-size: 22px;
  line-height: 28px;
  color: #000;
  overflow: hidden;
}
.app ul {
  list-style: none;
  margin: 0;
  padding: 0;
}
.app button,
.app input,
.app select {
  font: inherit;
  color: inherit;
  margin: 0;
  padding: 0;
  border: 0;
  background: none;
  box-sizing: border-box;
}
.icon {
  width: 32px;
  height: 32px;
  flex: none;
  display: block;
  overflow: visible;
  font-family: 'DejaVu Sans Condensed', 'DejaVu Sans', sans-serif;
}

/* header */
.chrome {
  padding-top: 1px;
  background: linear-gradient(90deg, #e3e6d8 0%, #e8e9dc 40%, #eeeae0 60%, #f0ece2 100%);
  border-bottom: 3px solid #7d7b6c;
}
.row {
  display: flex;
  height: 55px;
  align-items: flex-start;
}
.app .menubar {
  display: flex;
  padding-top: 4px;
}
.menubar > li {
  position: relative;
  border: 2px solid transparent;
  border-bottom: 0;
}
.menubar > li:first-child {
  margin-left: -2px;
}
.menu-btn {
  display: block;
  height: 40px;
  padding: 0 13px !important;
  white-space: nowrap;
}
.open .menu-btn {
  padding: 0 14px !important;
}
.open {
  z-index: 3;
  background: #fcfcf9;
  border-color: #8b8b82 !important;
}
.dropdown {
  position: absolute;
  z-index: 2;
  top: 36px;
  left: -2px;
  width: 276px;
  border: 2px solid #8b8b82;
  box-shadow: 6px 6px 8px rgba(60, 60, 50, 0.4);
  background: linear-gradient(90deg, #fcfcf9 0, #f2f1e8 12px, #dfdecd 32px, #b9b99c 48px, #fcfcf9 48px);
}
.app .open .dropdown {
  padding: 2px 0;
}
.open::after {
  content: '';
  position: absolute;
  z-index: 3;
  left: 0;
  right: 0;
  top: 34px;
  height: 8px;
  background: #fcfcf9;
}
.item {
  display: flex;
  align-items: center;
  gap: 23px;
  width: 272px;
  height: 47px;
  margin-left: 2px !important;
  padding-left: 4px !important;
  border: 2px solid transparent !important;
  text-align: left;
  white-space: nowrap;
}
.app .item.active {
  background: #c3d1ef;
  border-color: #2c62bd !important;
}
.item .sub {
  margin-left: auto;
  margin-right: 12px;
  border-left: 10px solid #000;
  border-top: 8px solid transparent;
  border-bottom: 8px solid transparent;
}
.rule {
  height: 2px;
  margin: 2px 0 2px 64px;
  background: #b4b4ae;
}

/* toolbars */
.toolbar {
  display: flex;
  align-items: center;
  height: 50px;
  border-bottom: 3px solid #a3a481;
  border-radius: 4px 4px 4px 0;
  background: linear-gradient(#fafaf7 0%, #eeeee5 45%, #dcdccd 72%, #c3c3ab 100%);
}
.toolbar.docked {
  margin-left: auto;
  flex: none;
  overflow: hidden;
}
.topology {
  width: 685px;
}
.editor {
  width: 660px;
}
.georef {
  width: 709px;
}
.grip {
  flex: none;
  width: 5px;
  height: 34px;
  margin: 0 3px 0 2px;
  background: repeating-linear-gradient(#b3b2a2 0 4px, transparent 4px 9px);
}
.docked .grip {
  margin: 0 11px 0 6px;
}
.docked .grip + * {
  margin-left: 1px !important;
}
.tools {
  display: flex;
  align-items: center;
}
.navRight {
  margin-left: 284px;
}
.pageRight {
  margin-left: 270px;
}
.tool {
  flex: none;
  width: 45px;
  height: 47px;
  display: flex;
  align-items: center;
  justify-content: center;
}
.app .tool.on {
  border: 2px solid #3567bd;
  background: #dfe6f1;
}
.sep {
  flex: none;
  width: 2px;
  height: 30px;
  margin: 0 5px;
  background: #bdbcab;
}
.more {
  align-self: stretch;
  flex: none;
  width: 21px;
  margin-left: 4px !important;
  position: relative;
  background: linear-gradient(#f2f2ec, #a9a98f) !important;
}
.more::before {
  content: '';
  position: absolute;
  left: 5px;
  top: 31px;
  width: 11px;
  height: 3px;
  background: #000;
}
.more::after {
  content: '';
  position: absolute;
  left: 4px;
  top: 38px;
  border-top: 7px solid #000;
  border-left: 6px solid transparent;
  border-right: 6px solid transparent;
}
.text-btn {
  display: flex;
  align-items: center;
  gap: 7px;
  white-space: nowrap;
}
.caret {
  display: inline-block;
  margin-right: 6px;
  border-top: 6px solid #000;
  border-left: 5px solid transparent;
  border-right: 5px solid transparent;
}
.caret.dim {
  margin: 0;
  border-top-color: #b3b1a4;
}
.mini {
  width: 21px;
  display: flex;
  justify-content: center;
}
.combo {
  position: relative;
  flex: none;
  height: 44px;
}
.combo input,
.combo select {
  display: block;
  width: 100%;
  height: 100%;
  appearance: none;
  border: 2px solid #7f9db9 !important;
  background: #fff !important;
  padding-left: 20px !important;
  opacity: 1;
}
.combo.off {
  height: 42px;
}
.combo.off select {
  border: 2px solid #fbfbf5 !important;
  border-top-color: #bcbbad !important;
  border-left-color: #bcbbad !important;
  background: #ebe9da !important;
}
.combo::before {
  content: '';
  position: absolute;
  right: 4px;
  top: 4px;
  width: 30px;
  bottom: 4px;
  background: linear-gradient(135deg, #d5e0fc, #b4c8f5);
  border-radius: 3px;
}
.combo::after {
  content: '';
  position: absolute;
  right: 13px;
  top: 13px;
  width: 8px;
  height: 8px;
  border: solid #4d6185;
  border-width: 0 4px 4px 0;
  transform: rotate(45deg);
}
.combo.off::before {
  background: #f1f1ea;
  border: 1px solid #dddccd;
}
.combo.off::after {
  border-color: #c6c5b8;
}
.scale {
  width: 315px;
  margin-left: 223px;
}
.docked .topo-combo {
  width: 329px;
  margin-left: 18px;
}
.layer-combo {
  width: 398px;
  margin-left: 8px;
}

/* workspace */
.work {
  display: flex;
}
.toc {
  flex: none;
  width: 489px;
  overflow: hidden;
}
.toc h2 {
  margin: 0;
  padding: 4px 0;
  font-size: 22px;
  font-weight: 400;
  line-height: 28px;
  text-indent: -2px;
  background: linear-gradient(90deg, #dedccb, #e9e7db);
}
.toc-tools {
  display: flex;
  align-items: center;
  height: 52px;
  padding-right: 2px;
  border-bottom: 3px solid #a2a78f;
  background: linear-gradient(#faf9f6 0%, #eceadf 40%, #c5c4ae 100%);
}
.toc-tools > :first-child {
  margin-left: -2px !important;
}
.root,
.layer {
  display: flex;
  align-items: center;
  height: 36px;
}
.root {
  padding: 5px 0 0 8px;
}
.root .icon {
  margin: 0 8px 0 14px;
}
.layer {
  padding-left: 47px;
}
.app .fold {
  flex: none;
  width: 18px;
  height: 18px;
  border: 2px solid #8ba3bd;
  border-radius: 3px;
  background: linear-gradient(#000, #000) center / 10px 2px no-repeat, linear-gradient(135deg, #fff, #cfcbbd);
}
.app .layer input {
  flex: none;
  appearance: none;
  width: 23px;
  height: 23px;
  margin: 0 12px 0 16px;
  border: 2px solid #111;
  background: #fff;
}
.layer input:checked::before {
  content: '';
  display: block;
  width: 15px;
  height: 14px;
  margin: 2px;
  background: #000;
  clip-path: polygon(0 35%, 35% 65%, 100% 0, 100% 35%, 35% 100%, 0 70%);
}
.layer label {
  height: 36px;
  padding: 0 3px;
  line-height: 36px;
  white-space: nowrap;
}
.layer label.selected {
  flex: 1;
  background: #3166c5;
  color: #fff;
}
.swatch {
  display: block;
  margin: 6px 0 7px 112px;
}
.splitter {
  flex: none;
  width: 9px;
  border-left: 3px solid #94a7b8;
  border-right: 5px solid #85827a;
  background: #ebe8d9;
}
.view {
  flex: 1;
  min-width: 0;
  display: flex;
  flex-direction: column;
}
.top-ruler {
  height: 42px;
  padding: 5px 39px 0 0;
  box-sizing: border-box;
  display: flex;
  justify-content: flex-end;
  align-items: flex-start;
}
.top-ruler svg,
.side-ruler svg {
  display: block;
  flex: none;
}
.stage {
  flex: 1;
  display: flex;
  border-top: 3px solid #7d7b6c;
}
.side-ruler {
  flex: none;
  width: 42px;
  padding: 50px 0 0 4px;
  box-sizing: border-box;
  border-right: 4px solid #7d7b6c;
}
.canvas {
  flex: 1;
  display: flex;
  justify-content: flex-end;
  padding: 50px 35px 41px 0;
}
.paper {
  position: relative;
  width: 741px;
  height: 1004px;
  box-sizing: border-box;
  border: 2px solid #000;
  background: #fff;
  box-shadow: 8px 8px 0 #807c7e;
}
.margins {
  position: absolute;
  inset: 15px 13px 15px 12px;
  border: 2px dotted #a7a7a7;
}
.frame {
  position: absolute;
  left: 78px;
  top: 126px;
  width: 581px;
  height: 628px;
}
.map {
  display: block;
  width: 100%;
  height: 100%;
}
.handle {
  position: absolute;
  width: 10px;
  height: 10px;
  margin: -7px 0 0 -7px;
  border: 2px solid #000;
  background: #12cfcf;
}
</style>
